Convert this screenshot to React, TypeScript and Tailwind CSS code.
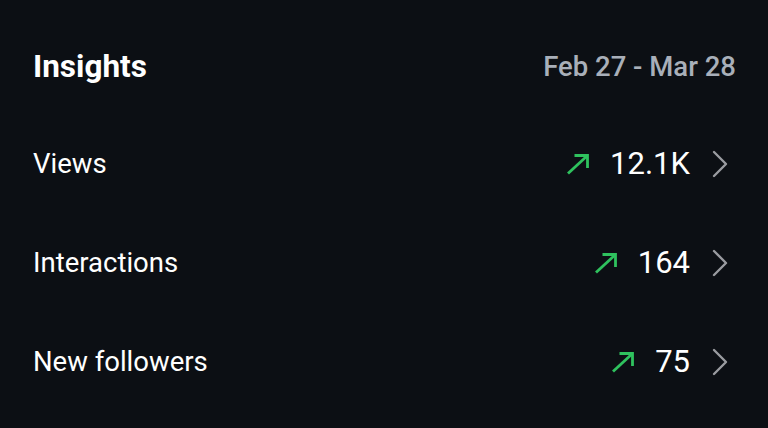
const rows = [
  { label: "Views", value: "12.1K" },
  { label: "Interactions", value: "164" },
  { label: "New followers", value: "75" },
];

function TrendArrow() {
  return (
    <svg viewBox="0 0 24 22" className="w-[24px] h-[22px] text-[#2fc25e]" fill="none" stroke="currentColor" strokeWidth={2.8} strokeLinecap="butt">
      <path d="M2 20.5 L21 3" />
      <path d="M8.5 2.5 H21.5 V15" />
    </svg>
  );
}

function Chevron() {
  return (
    <svg viewBox="0 0 16 28" className="w-[16px] h-[28px] text-[#9a9ba0]" fill="none" stroke="currentColor" strokeWidth={2.4} strokeLinecap="round" strokeLinejoin="round">
      <path d="M2 2 L14 14 L2 26" />
    </svg>
  );
}

export default function App() {
  return (
    <div className="w-[768px] h-[428px] bg-[#0c0f14] text-white font-['Roboto',sans-serif] overflow-hidden">
      {/* Header */}
      <div className="flex items-center justify-between pl-[33px] pr-[32px] pt-[46px] h-[88px]">
        <h1 className="text-[31.5px] font-bold leading-none">Insights</h1>
        <span className="text-[27.5px] font-medium text-[#a9afb9] leading-none">Feb 27 - Mar 28</span>
      </div>

      {/* Rows */}
      <div className="flex flex-col pt-[26px]">
        {rows.map((r) => (
          <div key={r.label} className="flex items-center justify-between h-[99px] pl-[33px] pr-[40px]">
            <span className="text-[27.5px] leading-none">{r.label}</span>
            <div className="flex items-center">
              <TrendArrow />
              <span className="text-[31px] leading-none ml-[20px] mr-[22px]">{r.value}</span>
              <Chevron />
            </div>
          </div>
        ))}
      </div>
    </div>
  );
}
